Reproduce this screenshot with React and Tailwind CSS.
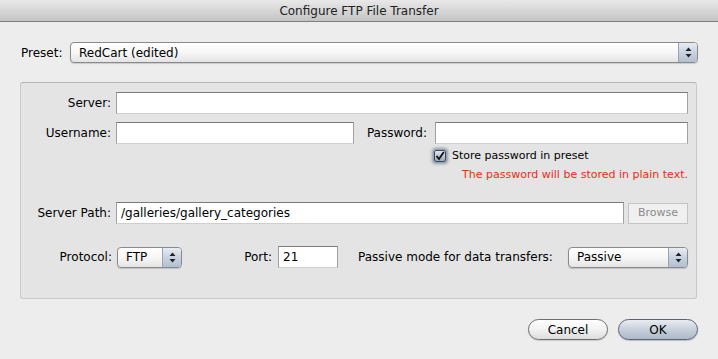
import React from "react";

const font = { fontFamily: '"DejaVu Sans", "Liberation Sans", sans-serif' };

function Arrows({ className = "" }) {
  return (
    <svg width="7" height="11" viewBox="0 0 7 11" className={className}>
      <path d="M3.5 0.5 L6.5 4 L0.5 4 Z" fill="#222" />
      <path d="M3.5 10.5 L6.5 7 L0.5 7 Z" fill="#222" />
    </svg>
  );
}

function Select({ label, className = "" }) {
  return (
    <div
      className={`flex h-[21px] items-stretch rounded-[4px] border border-[#8a8a8a] bg-gradient-to-b from-white via-[#f7f7f7] to-[#e4e4e4] shadow-[0_1px_1px_rgba(0,0,0,0.15)] overflow-hidden ${className}`}
    >
      <div className="flex-1 flex items-center pl-[8px] text-[12px] text-black">{label}</div>
      <div className="w-[19px] flex items-center justify-center bg-gradient-to-b from-[#e8edf5] via-[#c9d2e0] to-[#b3bfd1] border-l border-[#9aa3b2]">
        <Arrows />
      </div>
    </div>
  );
}

function Field({ value = "", className = "" }) {
  return (
    <div
      className={`h-[22px] bg-white border border-[#a0a0a0] border-t-[#7a7a7a] border-b-[#cfcfcf] flex items-center pl-[4px] text-[12px] text-black ${className}`}
    >
      {value}
    </div>
  );
}

export default function App() {
  return (
    <div className="w-[718px] h-[359px] bg-[#ededed] flex flex-col text-[12px] text-black" style={font}>
      <div className="h-[22px] bg-gradient-to-b from-[#e9e9e9] to-[#c4c4c4] border-b border-[#7e7e7e] flex items-center justify-center text-[12px] text-[#222]">
        Configure FTP File Transfer
      </div>

      <div className="flex items-center mt-[20px] pl-[21px] pr-[20px]">
        <span className="w-[49px]">Preset:</span>
        <Select label="RedCart (edited)" className="w-[628px]" />
      </div>

      <div className="mx-[20px] mt-[19px] h-[217px] w-[677px] rounded-[3px] border border-[#c9c9c9] border-t-[#b4b4b4] bg-[#e4e4e4] flex flex-col pt-[9px]">
        <div className="flex items-center">
          <span className="w-[95px] text-right pr-[5px]">Server:</span>
          <Field className="w-[572px]" />
        </div>
        <div className="flex items-center mt-[8px]">
          <span className="w-[95px] text-right pr-[5px]">Username:</span>
          <Field className="w-[238px]" />
          <span className="w-[81px] text-right pr-[8px]">Password:</span>
          <Field className="w-[253px]" />
        </div>
        <div className="flex items-center mt-[4px] pl-[413px]">
          <div className="w-[12px] h-[12px] rounded-[2px] border border-[#3a4a60] bg-gradient-to-b from-[#dfe6ef] to-[#9aa8bb] shadow-[0_0_3px_2px_rgba(40,60,90,0.45)] flex items-center justify-center">
            <svg width="10" height="10" viewBox="0 0 10 10">
              <path d="M1.5 5 L4 8 L8.8 1" stroke="#111" strokeWidth="1.8" fill="none" />
            </svg>
          </div>
          <span className="ml-[6px] text-[11px]">Store password in preset</span>
        </div>
        <div className="flex justify-end pr-[8px] mt-[2px] text-[11px] text-[#e0301e]">
          The password will be stored in plain text.
        </div>
        <div className="flex items-center mt-[19px]">
          <span className="w-[95px] text-right pr-[5px]">Server Path:</span>
          <Field value="/galleries/gallery_categories" className="w-[508px] h-[21px]" />
          <div className="ml-[4px] w-[60px] h-[21px] border border-[#c4c4c4] bg-[#f0f0f0] flex items-center justify-center text-[11px] text-[#8a8a8a]">
            Browse
          </div>
        </div>
        <div className="flex items-center mt-[22px]">
          <span className="w-[96px] text-right pr-[5px]">Protocol:</span>
          <Select label="FTP" className="w-[65px]" />
          <span className="w-[96px] text-right pr-[6px]">Port:</span>
          <Field value="21" className="w-[60px] h-[21px]" />
          <span className="ml-[20px] w-[210px]">Passive mode for data transfers:</span>
          <Select label="Passive" className="w-[120px]" />
        </div>
      </div>

      <div className="flex justify-end gap-[10px] pr-[20px] mt-[20px]">
        <div className="w-[80px] h-[21px] rounded-full border border-[#6e6e6e] bg-gradient-to-b from-white via-[#f2f2f2] to-[#dcdcdc] flex items-center justify-center text-[12px] shadow-[0_1px_1px_rgba(0,0,0,0.15)]">
          Cancel
        </div>
        <div className="w-[80px] h-[21px] rounded-full border border-[#5a6478] bg-gradient-to-b from-[#e8ecf2] via-[#c8d0dc] to-[#aeb8c8] flex items-center justify-center text-[12px] shadow-[0_1px_1px_rgba(0,0,0,0.2)]">
          OK
        </div>
      </div>
    </div>
  );
}
